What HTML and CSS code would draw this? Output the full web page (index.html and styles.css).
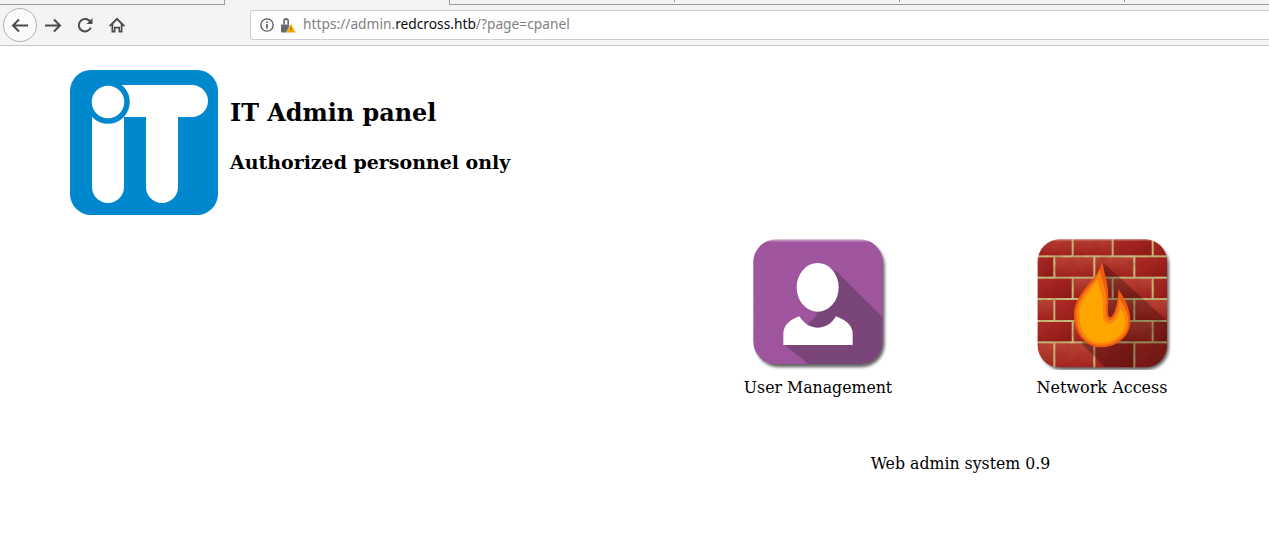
FILE: index.html
```html
<!DOCTYPE html>
<html lang="en">
<head>
<meta charset="utf-8">
<title>IT Admin panel</title>
<link rel="stylesheet" href="styles.css">
</head>
<body>
<div class="chrome">
  <div class="tabstrip">
    <div class="tab tab-first"></div>
    <div class="tab tab-active"></div>
    <div class="tab tab-bg tab-start"></div>
    <div class="tab tab-bg"></div>
    <div class="tab tab-bg"></div>
    <div class="tab tab-bg tab-last"></div>
  </div>
  <div class="toolbar">
    <div class="nav">
      <span class="back">
        <svg width="20" height="20" viewBox="0 0 20 20"><path d="M18 10.5H3M9 4.5L3 10.5L9 16.5" fill="none" stroke="#4a4a4f" stroke-width="2"/></svg>
      </span>
      <svg class="nav-icon" width="20" height="20" viewBox="0 0 20 20"><path d="M2 10.5H17M11 4.5L17 10.5L11 16.5" fill="none" stroke="#4a4a4f" stroke-width="2"/></svg>
      <svg class="nav-icon" width="20" height="20" viewBox="0 0 20 20"><path d="M15.8 12.5A6.2 6.2 0 1 1 13.8 5.3L15.8 7" fill="none" stroke="#4a4a4f" stroke-width="2"/><path d="M17.5 3V9H11.5Z" fill="#4a4a4f"/></svg>
      <svg class="nav-icon" width="20" height="20" viewBox="0 0 20 20"><path d="M10 2.5L2 10.5L3.2 11.7L4.5 10.5V17.5H8.5V13.5H11.5V17.5H15.5V10.5L16.8 11.7L18 10.5Z M6.3 15.8V9L10 5.3L13.7 9V15.8H13V11.8H7V15.8Z" fill="#4a4a4f" fill-rule="evenodd"/></svg>
    </div>
    <div class="urlbar">
      <svg class="info" width="14" height="14" viewBox="0 0 14 14"><circle cx="7" cy="7" r="6.2" fill="none" stroke="#55555a" stroke-width="1.3"/><rect x="6.2" y="6" width="1.6" height="4.6" fill="#55555a"/><rect x="6.2" y="3.4" width="1.6" height="1.6" fill="#55555a"/></svg>
      <svg class="lock" width="15" height="15" viewBox="0 0 15 15"><path d="M2.2 3A2.9 2.9 0 0 1 8 3V6.5H6.4V3.2A1.3 1.3 0 0 0 3.8 3.2V6.5H2.2Z" fill="#6a6a6e"/><rect x="0" y="6.5" width="8.5" height="8" rx="1.2" fill="#6a6a6e"/><path d="M10 5.6L14.9 14.7H5.1Z" fill="#f7ab00" stroke="#fff" stroke-width=".4"/><rect x="9.6" y="9.2" width=".8" height="2.8" fill="#7a5a00"/><rect x="9.6" y="12.6" width=".8" height=".9" fill="#7a5a00"/></svg>
      <span class="url">https://admin.<span class="domain">redcross.htb</span>/?page=cpanel</span>
    </div>
  </div>
</div>
<main class="page">
  <header class="head">
    <svg class="logo" width="148" height="145" viewBox="0 0 148 145">
      <rect width="148" height="145" rx="21" fill="#0088cf"/>
      <path d="M22 32H54V117A16 16 0 0 1 22 117Z" fill="#fff"/>
      <path d="M40 15H122A16 16 0 0 1 122 47H108V117A16 16 0 0 1 76 117V47H40Z" fill="#fff"/>
      <circle cx="38" cy="32" r="19" fill="#fff" stroke="#0088cf" stroke-width="5.5"/>
    </svg>
    <div class="titles">
      <h2>IT Admin panel</h2>
      <h3>Authorized personnel only</h3>
    </div>
  </header>
  <section class="panel">
    <div class="apps">
      <a class="app">
        <svg width="160" height="140" viewBox="-6 0 480 420" class="app-icon">
          <defs>
            <clipPath id="c1"><rect x="40" y="28" width="388" height="374" rx="68"/></clipPath>
            <linearGradient id="edge1" x1="0" y1="0" x2="0" y2="1"><stop offset="0" stop-color="#d4b0d0"/><stop offset=".025" stop-color="#a0569f"/><stop offset="1" stop-color="#9f559e"/></linearGradient>
            <filter id="soft1" x="-10%" y="-10%" width="120%" height="120%"><feGaussianBlur stdDeviation="4"/></filter>
            <filter id="fine1"><feGaussianBlur stdDeviation="1.2"/></filter>
          </defs>
          <rect x="46" y="36" width="388" height="376" rx="70" fill="#333" opacity=".75" filter="url(#soft1)"/>
          <rect x="40" y="28" width="388" height="374" rx="68" fill="url(#edge1)"/>
          <g clip-path="url(#c1)">
            <path d="M285 120L428 262V402H205L135 345L225 262Z" fill="#7a4579"/>
          </g>
          <g filter="url(#fine1)">
            <ellipse cx="233" cy="172" rx="63" ry="73" fill="#fff"/>
            <path d="M130 345V312C130 285 150 270 178 259C195 285 215 293 233 293C252 293 272 285 288 259C316 270 338 285 338 312V345Z" fill="#fff"/>
          </g>
        </svg>
        <span class="app-name">User Management</span>
      </a>
      <a class="app">
        <svg width="160" height="140" viewBox="-9 0 480 420" class="app-icon">
          <defs>
            <clipPath id="c2"><rect x="38" y="28" width="388" height="384" rx="66"/></clipPath>
            <linearGradient id="brick" x1="0" y1="0" x2="0" y2="1"><stop offset="0" stop-color="#bb4536"/><stop offset="1" stop-color="#a2221d"/></linearGradient>
            <linearGradient id="brick2" x1="0" y1="0" x2="1" y2="1"><stop offset="0" stop-color="#b02e27"/><stop offset="1" stop-color="#8f1816"/></linearGradient>
            <filter id="soft2" x="-10%" y="-10%" width="120%" height="120%"><feGaussianBlur stdDeviation="4"/></filter>
            <filter id="fine2"><feGaussianBlur stdDeviation="1.5"/></filter>
            <filter id="mottle" x="0" y="0" width="100%" height="100%"><feTurbulence type="fractalNoise" baseFrequency=".045" numOctaves="3" seed="4"/><feColorMatrix values="0 0 0 0 .25  0 0 0 0 .02  0 0 0 0 .02  1.6 0 0 0 -.55"/></filter>
          </defs>
          <rect x="44" y="36" width="388" height="384" rx="68" fill="#333" opacity=".75" filter="url(#soft2)"/>
          <g clip-path="url(#c2)">
            <g filter="url(#fine2)">
              <rect x="30" y="20" width="410" height="400" fill="#c9bd7c"/>
              <g fill="url(#brick)">
                <rect x="30" y="20" width="110" height="56"/><rect x="146" y="20" width="114" height="56"/><rect x="266" y="20" width="114" height="56" fill="url(#brick2)"/><rect x="386" y="20" width="50" height="56" fill="url(#brick2)"/>
                <rect x="30" y="82" width="55" height="58" fill="url(#brick2)"/><rect x="91" y="82" width="114" height="58"/><rect x="211" y="82" width="114" height="58"/><rect x="331" y="82" width="105" height="58" fill="url(#brick2)"/>
                <rect x="30" y="146" width="110" height="58" fill="url(#brick2)"/><rect x="146" y="146" width="114" height="58"/><rect x="266" y="146" width="114" height="58"/><rect x="386" y="146" width="50" height="58" fill="url(#brick2)"/>
                <rect x="30" y="210" width="55" height="60"/><rect x="91" y="210" width="114" height="60" fill="url(#brick2)"/><rect x="211" y="210" width="114" height="60"/><rect x="331" y="210" width="105" height="60"/>
                <rect x="30" y="276" width="110" height="58" fill="url(#brick2)"/><rect x="146" y="276" width="114" height="58"/><rect x="266" y="276" width="114" height="58"/><rect x="386" y="276" width="50" height="58" fill="url(#brick2)"/>
                <rect x="30" y="340" width="55" height="80"/><rect x="91" y="340" width="114" height="80"/><rect x="211" y="340" width="114" height="80" fill="url(#brick2)"/><rect x="331" y="340" width="105" height="80" fill="url(#brick2)"/>
              </g>
            </g>
            <rect x="38" y="28" width="388" height="384" filter="url(#mottle)" opacity=".3"/>
            <path d="M232 95L426 272V412H240L170 340Z" fill="#000" opacity=".25"/>
            <rect x="38" y="28" width="388" height="3" fill="#ecc8c0" opacity=".7"/>
          </g>
          <g filter="url(#fine2)">
            <path d="M232 93C236 130 250 155 250 205C250 235 245 255 255 262C268 262 280 215 280 178C300 205 316 240 316 272C316 320 275 352 228 352C180 352 147 310 147 255C147 185 222 150 232 93Z" fill="#f05a0e"/>
            <path d="M224 118C228 150 244 170 244 212C244 245 238 264 254 270C270 270 282 235 283 205C298 228 310 250 310 274C310 316 272 346 228 346C184 346 154 308 154 255C154 195 214 165 224 118Z" fill="#f98510"/>
            <path d="M216 145C220 170 234 190 234 225C234 255 230 276 252 281C272 281 282 255 286 235C295 250 301 262 301 276C301 310 268 338 228 338C190 338 163 305 163 255C163 205 206 182 216 145Z" fill="#ffa500"/>
          </g>
        </svg>
        <span class="app-name app-name-wide">Network Access</span>
      </a>
    </div>
    <p class="version">Web admin system 0.9</p>
  </section>
</main>
</body>
</html>
```
FILE: styles.css
```css
html, body {
  margin: 0;
  padding: 0;
  background: #fff;
  overflow: hidden;
}
body {
  font-family: "DejaVu Serif", serif;
  color: #000;
}
.chrome {
  background: #f5f4f2;
  height: 45px;
  border-bottom: 1px solid #c8c7c5;
}
.tabstrip {
  display: flex;
  height: 5px;
}
.tab {
  width: 225px;
  box-sizing: border-box;
  flex: none;
}
.tab-first {
  border-bottom: 1px solid #9a9a98;
  border-right: 1px solid #9a9a98;
}
.tab-active {
  width: 224px;
}
.tab-bg {
  border-bottom: 1px solid #9a9a98;
  display: flex;
  justify-content: flex-end;
}
.tab-bg::after {
  content: "";
  width: 1px;
  height: 2px;
  background: #9a9a98;
}
.tab-start {
  width: 226px;
  border-left: 1px solid #9a9a98;
}
.tab-last {
  flex: 1;
}
.tab-last::after {
  display: none;
}
.toolbar {
  display: flex;
  align-items: flex-start;
  height: 40px;
}
.nav {
  display: flex;
  align-items: center;
  width: 250px;
  height: 40px;
  padding-left: 3px;
  box-sizing: border-box;
}
.back {
  width: 34px;
  height: 34px;
  box-sizing: border-box;
  border: 1px solid #b1b1b1;
  border-radius: 50%;
  background: #fbfbfb;
  display: flex;
  align-items: center;
  justify-content: center;
  flex: none;
}
.nav-icon {
  flex: none;
  margin-left: 6px;
  margin-right: 6px;
}
.urlbar {
  flex: 1;
  margin-top: 5px;
  height: 30px;
  box-sizing: border-box;
  background: #fff;
  border: 1px solid #cfcecc;
  border-right: 0;
  border-radius: 3px 0 0 3px;
  display: flex;
  align-items: center;
  padding-left: 9px;
}
.info { flex: none; }
.lock { flex: none; margin-left: 7px; }
.url {
  margin-left: 7px;
  padding-bottom: 2px;
  font-family: "Noto Sans", sans-serif;
  font-size: 13.75px;
  line-height: 18px;
  color: #808085;
  white-space: nowrap;
}
.domain { color: #0c0c0d; }
.page {
  padding: 24px 0 0 70px;
}
.head {
  display: flex;
  align-items: flex-start;
  gap: 12px;
}
.logo { flex: none; }
h2 {
  margin: 25px 0 0;
  font-size: 23.9px;
  line-height: 36px;
  font-weight: 700;
}
h3 {
  margin: 19px 0 0;
  font-size: 18.97px;
  line-height: 24px;
  font-weight: 700;
}
.panel {
  margin: 15px 0 0 606px;
  width: 568px;
}
.apps {
  display: grid;
  grid-template-columns: 1fr 1fr;
}
.app {
  display: flex;
  flex-direction: column;
  align-items: center;
  font-size: 15.75px;
}
.app-icon {
  display: block;
  margin-bottom: 7px;
}
.app-name {
  line-height: 22px;
}
.app-name-wide {
  font-size: 16px;
}
.version {
  margin: 54px 0 0;
  padding-left: 1px;
  text-align: center;
  font-size: 15.75px;
  line-height: 22px;
}
```
